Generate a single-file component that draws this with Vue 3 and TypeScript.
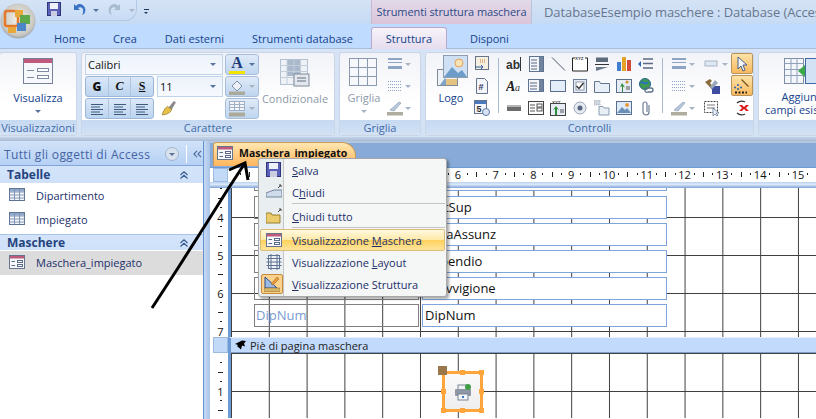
<script setup lang="ts">
const form = `<rect x=".5" y=".5" width="15" height="13" fill="#f7f8fb" stroke="#66748e"/><rect x="1" y="1" width="14" height="2.5" fill="#c05a7c"/><path d="M2.5 6.5h3.5M2.5 10.5h3.5" stroke="#5b6a85"/><rect x="8.5" y="5.5" width="5" height="2" fill="#fff" stroke="#5b6a85"/><rect x="8.5" y="9.5" width="5" height="2" fill="#fff" stroke="#5b6a85"/>`
const bigForm = `<rect x=".5" y=".5" width="29" height="25" fill="#f7f8fb" stroke="#75829a"/><rect x="1" y="1" width="28" height="4" fill="#c05a7c"/><path d="M4 12.500h7M4 19.500h7" stroke="#7f8ba0"/><rect x="14.500" y="10.500" width="11" height="3" fill="#fff" stroke="#7f8ba0"/><rect x="14.500" y="17.500" width="11" height="3" fill="#fff" stroke="#7f8ba0"/>`
const table = `<rect x=".5" y=".5" width="15" height="12" fill="#f4f6fb" stroke="#5f7393"/><rect x="1" y="1" width="14" height="2.5" fill="#8fa8cb"/><path d="M.5 4h15M.5 7h15M.5 10h15M5.5 1v11M10.5 1v11" stroke="#8196b5" fill="none"/>`
const bars = (c = '#8ea4c4') => `<rect x="1" y="2" width="14" height="2" fill="${c}"/><rect x="1" y="6" width="14" height="1" fill="${c}"/><rect x="1" y="10" width="14" height="3" fill="${c}"/>`
const dots = `<path d="M1 3.5h14M1 6.5h14M1 9.5h14M1 12.5h14" stroke="#8ea4c4" stroke-dasharray="1 1"/>`
const pen = `<path d="M3 10 12 2l2 1-7 8z" fill="#b8c8dc" stroke="#8596ae" stroke-width=".6"/><rect x="0" y="12" width="16" height="3.5" fill="#b0ad9e"/>`

const galleryIcons: string[] = [
  `<text x="0" y="13" font-family="Liberation Sans" font-weight="700" font-size="12" fill="#333">ab</text><path d="M14.5 1v14" stroke="#333"/>`,
  `<rect x="1.5" y=".5" width="14" height="15" fill="#f3f5fa" stroke="#5f7393"/><rect x="11" y="1" width="4" height="14" fill="#6f829e"/><path d="M3 4h6M3 7h6M3 10h6M3 13h6" stroke="#5b6a85"/>`,
  `<path d="M2 1.5 15 14.5" stroke="#4a5a70"/>`,
  `<path d="M3 2H.5v13h15V2H13" fill="#fff" stroke="#222"/><text x="3" y="4" font-family="Liberation Sans" font-weight="700" font-size="4.4" fill="#444">XYZ</text>`,
  `<rect x="2" y="1.5" width="12" height="4.5" fill="#5d6b7d"/><path d="M1 8.5h14" stroke="#333"/><path d="M2 15V11h12z" fill="#6d7b8d"/>`,
  `<rect x="1" y="6" width="4" height="9" fill="#3f7fd0"/><rect x="6" y="1" width="4" height="14" fill="#e2a22a"/><rect x="11" y="4" width="4" height="11" fill="#d04b3a"/>`,
  `<path d="M5 3h10M5 7.5h10M5 12h10" stroke="#5b6a85" stroke-width="1.4"/><path d="M0 8l3-3v6z" fill="#2c64b8"/>`,
  `<text x="0" y="13" font-family="Liberation Serif" font-weight="700" font-style="italic" font-size="14" fill="#222">A</text><text x="9" y="13" font-family="Liberation Serif" font-style="italic" font-size="10" fill="#333">a</text>`,
  `<rect x=".5" y="1.5" width="15" height="12" fill="#f3f5fa" stroke="#5f7393"/><rect x="11" y="2" width="4" height="11" fill="#6f829e"/><path d="M2 5h7M2 8h7M2 11h7" stroke="#5b6a85"/>`,
  `<rect x=".5" y="2.5" width="15" height="11" fill="#e4eefa" stroke="#5a6d8a"/>`,
  `<rect x="1.5" y="1.5" width="13" height="13" fill="#e6ebf3" stroke="#6c7d97"/><rect x="4" y="4" width="8" height="8" fill="#fff" stroke="#8a99ae"/><path d="M4.5 8 7 10.5 11.5 5" stroke="#333" stroke-width="1.4" fill="none"/>`,
  `<path d="M.5 14.5V3.5h5l1 2h9v9z" fill="#e8eff8" stroke="#62758f"/>`,
  `<rect x=".5" y="1.5" width="15" height="13" fill="#e6ecf4" stroke="#5a6d8a"/><path d="M6 14V8L4 9.5 6 5l3 4.500-2-1v6z" fill="#2e8b3a"/><circle cx="11" cy="4" r="1.500" fill="#d08a2a"/><path d="M10 9h4M10 11h4" stroke="#555"/>`,
  `<circle cx="7" cy="6" r="5.500" fill="#3d9a50" stroke="#24608e"/><path d="M3 5c3-3 4 3 7-1" stroke="#2b6fc0" stroke-width="2" fill="none"/><path d="M7 12a2 2 0 0 1 3-2h3a2 2 0 0 1 0 4h-3a2 2 0 0 1-3-2z" fill="none" stroke="#5a6f88" stroke-width="1.3"/>`,
  `<rect x="1" y="5" width="14" height="6" fill="#6c6c6c"/><rect x="1" y="5" width="14" height="2" fill="#b5b5b5"/>`,
  `<rect x=".5" y="1.5" width="15" height="13" fill="#fff" stroke="#444"/><path d="M2 5h5M2 8h5M2 11h5" stroke="#555"/><rect x="9" y="4" width="5" height="3" fill="none" stroke="#555"/><rect x="9" y="8" width="5" height="3" fill="none" stroke="#555"/>`,
  `<rect x=".5" y="3.500" width="15" height="12" fill="#e6ecf4" stroke="#444"/><path d="M5 15V9L3 10l3-4 3 4-2-1v6z" fill="#2e8b3a"/><text x="2" y="3.500" font-family="Liberation Sans" font-weight="700" font-size="4.4" fill="#444">XYZ</text><path d="M10 10h4M10 12h4" stroke="#555"/>`,
  `<circle cx="8" cy="8" r="6" fill="#e5eaf2" stroke="#9aa7ba"/><circle cx="8" cy="8" r="2.500" fill="#55657f"/>`,
  `<path d="M0 0h6v5H0z" fill="#cfd6e0" stroke-dasharray="1 1" stroke="#a9b4c4"/><path d="M5 6.500h4l1 1.500h5v7H5z" fill="#e9eff7" stroke="#8a9ab0"/>`,
  `<rect x=".5" y="1.500" width="15" height="13" fill="#dfeafa" stroke="#5a6d8a"/><path d="M1 13 6 7l3 3 2-2 4 5z" fill="#6b8fb5"/><circle cx="11" cy="5" r="2" fill="#e89a3c"/>`,
  `<path d="M11 5v7a3 3 0 0 1-6 0V4a2 2 0 0 1 4 0v8" fill="none" stroke="#6d7d95" stroke-width="1.200"/>`,
]
const stackIcons = [
  `<rect x="1.500" y=".5" width="13" height="13" fill="#f5efe0" stroke="#66748e"/><path d="M6 4h6M6 6h6" stroke="#c9792c" stroke-dasharray="1 1"/><path d="M1 11h8M7 9l2 2-2 2" stroke="#2c5aa0" fill="none"/>`,
  `<path d="M2.500.5h8l3 3v12h-11z" fill="#f2f5fa" stroke="#66748e"/><text x="4.500" y="12" font-family="Liberation Sans" font-weight="700" font-size="9" fill="#335">#</text>`,
  `<rect x=".5" y=".5" width="12" height="13" fill="#f4f6fb" stroke="#66748e"/><rect x="1" y="1" width="11" height="3" fill="#4b79c0"/><text x="2.500" y="12" font-family="Liberation Sans" font-weight="700" font-size="9" fill="#333">5</text><circle cx="12" cy="12" r="3.500" fill="#d7e3f3" stroke="#5d7ea8"/>`,
]
const nums = (from: number, to: number) => Array.from({ length: to - from + 1 }, (_, i) => from + i)
const hCells = nums(0, 15).map((n) => (n >= 6 ? String(n) : ''))
const vCellsForm = nums(3, 7)
const vCellsFoot = ['', '1']
const rows = [
  { lab: '', fld: 'MatSup' },
  { lab: '', fld: 'DataAssunz' },
  { lab: '', fld: 'Stipendio' },
  { lab: '', fld: 'Provvigione' },
  { lab: 'DipNum', fld: 'DipNum' },
]
const galleryIndex = galleryIcons.map((svg, i) => ({ svg, i }))
const handles = ['tm', 'tr', 'ml', 'mr', 'bl', 'bm', 'br']
</script>

<template>
  <div class="app">
    <div class="title-row">
      <div class="qat">
        <svg class="ic" viewBox="0 0 16 16"><rect x=".5" y=".5" width="13" height="13" fill="#5a60b8" stroke="#2e3578"/><rect x="3" y="1" width="8" height="6" fill="#eef0fa"/><rect x="4" y="9" width="6" height="5" fill="#c9cddf"/></svg>
        <svg class="ic qi" viewBox="0 0 16 16"><path d="M3 2v6h6L7 6c3-2 6 0 5 5l-1 2c3-1 4-4 3-7S8 0 5 4z" fill="#3a72c4"/></svg>
        <span class="drop"></span>
        <svg class="ic qi" viewBox="0 0 16 16"><path d="M13 2v6H7l2-2C6 4 3 6 4 11l1 2C2 12 1 9 2 6s6-6 9-2z" fill="#a9bccf"/></svg>
        <span class="drop pale"></span>
      </div>
      <span class="qat-more"></span>
      <div class="ctx-head">Strumenti struttura maschera</div>
      <div class="doc-title">DatabaseEsempio maschere : Database (Acces</div>
    </div>

    <nav class="tabs">
      <span class="tab">Home</span>
      <span class="tab">Crea</span>
      <span class="tab">Dati esterni</span>
      <span class="tab">Strumenti database</span>
      <span class="tab active">Struttura</span>
      <span class="tab">Disponi</span>
    </nav>

    <section class="ribbon">
      <div class="group g-view">
        <div class="g-body big-col">
          <svg class="big" viewBox="0 0 30 28" v-html="bigForm"></svg>
          <span class="big-label">Visualizza</span>
          <span class="drop lbl-drop"></span>
        </div>
        <div class="g-label">Visualizzazioni</div>
      </div>

      <div class="group g-font">
        <div class="g-body font-body">
          <div class="font-left">
            <div class="combo font-combo"><span>Calibri</span><i class="drop"></i></div>
            <div class="font-mid">
              <div class="btns">
                <span class="fb b">G</span><span class="fb i">C</span><span class="fb u">S</span>
              </div>
              <div class="combo size-combo"><span>11</span><i class="drop"></i></div>
            </div>
            <div class="font-mid">
              <div class="btns">
                <span class="fb" v-for="a in 3" :key="a"><svg class="al" viewBox="0 0 14 12"><path d="M1 1.500h12M1 4h9M1 6.500h12M1 9h9M1 11.500h12" stroke="#3f5a7e" /></svg></span>
              </div>
              <svg class="brush" viewBox="0 0 16 16"><path d="M8 7 13 1l2 1-4 7z" fill="#8a8a8a"/><path d="M2 14c1-3 2-6 5-8l4 3c-1 3-5 5-9 5z" fill="#e7c04a" stroke="#8c6a1c" stroke-width=".6"/></svg>
            </div>
          </div>
          <div class="font-right">
            <div class="cbtn on">
              <span class="a-letter">A</span><i class="drop"></i>
            </div>
            <div class="cbtn">
              <svg class="ic" viewBox="0 0 16 16"><path d="M3 7 8 2l5 5-5 5z" fill="#eef2f8" stroke="#7f8fa6"/><rect y="12.500" width="16" height="3.500" fill="#aaa99a"/></svg><i class="drop pale"></i>
            </div>
            <div class="cbtn">
              <svg class="ic" viewBox="0 0 16 16"><rect x=".5" y=".5" width="15" height="9" fill="#f4f6fb" stroke="#9fb0c6"/><path d="M.5 3.500h15M.5 6.500h15M5.500 .5v9M10.500 .5v9" stroke="#9fb0c6"/><rect y="11.500" width="16" height="4" fill="#aaa99a"/></svg><i class="drop pale"></i>
            </div>
          </div>
          <div class="big-col cond">
            <svg class="big" viewBox="0 0 30 28"><rect x=".5" y=".5" width="27" height="25" fill="#eef2f7" stroke="#b3c0d0"/><rect x="7" y="1" width="13" height="16" fill="#a9b8cb"/><path d="M.5 6.500h27M.5 12.500h27M.5 18.500h27M7 .5v25M14 .5v25M20.500 .5v25" stroke="#c3cedb"/><rect x="14" y="15" width="15" height="12" fill="#e4e8ee" stroke="#7f8a99"/><path d="M17 19h9M17 22h9" stroke="#5f6d80"/></svg>
            <span class="big-label dim">Condizionale</span>
          </div>
        </div>
        <div class="g-label">Carattere</div>
      </div>

      <div class="group g-grid">
        <div class="g-body grid-body">
          <div class="big-col griglia">
            <svg class="big" viewBox="0 0 30 28"><rect x=".5" y=".5" width="27" height="27" fill="#f7f8fb" stroke="#8b9aae"/><path d="M9.500 0v28M18.500 0v28M0 9.500h28M0 18.500h28" stroke="#8b9aae"/></svg>
            <span class="big-label dim">Griglia</span>
            <span class="drop lbl-drop pale"></span>
          </div>
          <div class="stack">
            <span class="st"><svg class="ic" viewBox="0 0 16 16" v-html="bars()"></svg><i class="drop pale"></i></span>
            <span class="st"><svg class="ic" viewBox="0 0 16 16" v-html="dots"></svg><i class="drop pale"></i></span>
            <span class="st"><svg class="ic" viewBox="0 0 16 16" v-html="pen"></svg><i class="drop pale"></i></span>
          </div>
        </div>
        <div class="g-label">Griglia</div>
      </div>

      <div class="group g-ctrl">
        <div class="g-body ctrl-body">
          <div class="big-col logo">
            <svg class="logo-ic" viewBox="0 0 32 32"><rect x=".5" y="14.500" width="20" height="16" fill="#eef2f8" stroke="#7f8b99"/><path d="M3 30l5-7 5 7z" fill="#7fa3c9"/><rect x="9" y="24" width="11" height="6" fill="#e5c27f"/><rect x="6.500" y=".5" width="24" height="22" fill="#cfe0f5" stroke="#8c9cb1"/><circle cx="22" cy="8" r="4" fill="#f9e2b4" stroke="#e5a45b"/><path d="M7 22l8-10 6 6 4-3 5 7z" fill="#6e9cc9"/></svg>
            <span class="big-label">Logo</span>
          </div>
          <div class="col3">
            <svg v-for="(s, i) in stackIcons" :key="i" class="ic" viewBox="0 0 16 16" v-html="s"></svg>
          </div>
          <span class="vsep"></span>
          <div class="gallery">
            <svg v-for="g in galleryIndex" :key="g.i" class="ic" viewBox="0 0 16 16" v-html="g.svg"></svg>
          </div>
          <span class="vsep"></span>
          <div class="stack st2">
            <span class="st"><svg class="ic" viewBox="0 0 16 16" v-html="bars()"></svg><i class="drop pale"></i></span>
            <span class="st"><svg class="ic" viewBox="0 0 16 16" v-html="dots"></svg><i class="drop pale"></i></span>
            <span class="st"><svg class="ic" viewBox="0 0 16 16" v-html="pen"></svg><i class="drop pale"></i></span>
          </div>
          <div class="stack st3">
            <span class="st"><svg class="ic" viewBox="0 0 16 16"><rect x="1" y="5" width="12" height="5" fill="#dfe7f2" stroke="#a8b6c8"/></svg><i class="drop pale"></i></span>
            <span class="st"><svg class="ic" viewBox="0 0 16 16"><path d="M1 4 6 1l2 2-2 2 6 7-2 2-6-7z" fill="#8a6b3e"/><rect x="8" y="8" width="8" height="8" fill="#3f4b9e"/><path d="M11 2l3 3-6 6-2-2z" fill="#9aa7ba"/></svg></span>
            <span class="st"><svg class="ic" viewBox="0 0 16 16"><rect x=".5" y="1.500" width="13" height="11" fill="#fff" stroke="#444" stroke-dasharray="2 1"/><path d="M3 5h8M3 8h8" stroke="#777"/><path d="M9 8v8l2-2 2 2 1-1-2-2h3z" fill="#e6eef9" stroke="#5a6f8f" stroke-width=".7"/></svg></span>
          </div>
          <div class="tools">
            <span class="tool on"><svg class="ic" viewBox="0 0 16 16"><path d="M4 1v12l3-3 2 5 2-1-2-5h4z" fill="#f3f6fb" stroke="#4a5f88"/></svg></span>
            <span class="tool on"><svg class="ic" viewBox="0 0 16 16"><path d="M8 1l7 7-1 1-7-7z" fill="#7d5a22"/><path d="M1 9.500h.01M4 7h.01M4 11h.01M7 9.500h.01" stroke="#2f60b0" stroke-width="2" stroke-linecap="round"/><path d="M1 14.500h12" stroke="#222" stroke-width="2" stroke-dasharray="2 1.500"/></svg></span>
            <span class="tool"><svg class="ic" viewBox="0 0 16 16"><path d="M3 3a7 7 0 0 1 8-1M11 14a7 7 0 0 1-8-1" fill="none" stroke="#333" stroke-width="1.300"/><path d="M5 5h3l2 2 2-2h3l-3 3 3 3h-3l-2-2-2 2H5l3-3z" fill="#d91f1f"/></svg></span>
          </div>
        </div>
        <div class="g-label">Controlli</div>
      </div>

      <div class="group g-add">
        <div class="g-body big-col add">
          <svg class="add-ic" viewBox="0 0 32 28"><rect x=".5" y=".5" width="19" height="25" fill="#f3f6fb" stroke="#7f8ea5"/><path d="M.5 5.500h19M.5 11.500h19M.5 17.500h19M7 0v26M13 0v26" stroke="#8fa1b9"/><rect x="21.500" y=".5" width="12" height="25" fill="#d4e2f5" stroke="#3f69a8"/><path d="M14 13l7-6v12z" fill="#39a845"/></svg>
          <span class="add-text">Aggiungi<br />campi esistenti</span>
        </div>
        <div class="g-label"></div>
      </div>
    </section>

    <div class="ribbon-foot"></div>

    <main class="main">
      <aside class="nav">
        <div class="nav-head">
          <span class="nav-title">Tutti gli oggetti di Access</span>
          <span class="nav-circle"><i class="drop dark"></i></span>
          <span class="nav-line"></span>
          <svg class="chev-l" viewBox="0 0 10 8"><path d="M4.500 .5 1 4l3.500 3.500M9 .5 5.500 4 9 7.500" fill="none" stroke="#4d6d9e" stroke-width="1.300"/></svg>
        </div>
        <div class="sec first"><span>Tabelle</span><svg class="chev-u" viewBox="0 0 8 8"><path d="M.5 4 4 .8 7.500 4M.5 7.500 4 4.300l3.500 3.200" fill="none" stroke="#35588c" stroke-width="1.100"/></svg></div>
        <div class="item"><svg class="ic" viewBox="0 0 16 14" v-html="table"></svg><span>Dipartimento</span></div>
        <div class="item"><svg class="ic" viewBox="0 0 16 14" v-html="table"></svg><span>Impiegato</span></div>
        <div class="sec"><span>Maschere</span><svg class="chev-u" viewBox="0 0 8 8"><path d="M.5 4 4 .8 7.500 4M.5 7.500 4 4.300l3.500 3.200" fill="none" stroke="#35588c" stroke-width="1.100"/></svg></div>
        <div class="item sel"><svg class="ic" viewBox="0 0 16 14" v-html="form"></svg><span>Maschera_impiegato</span></div>
      </aside>

      <div class="split"></div>

      <div class="doc">
        <div class="doc-tabs">
          <div class="doc-tab"><svg class="ic" viewBox="0 0 16 14" v-html="form"></svg><span>Maschera_impiegato</span></div>
        </div>
        <div class="hruler">
          <span class="corner"></span>
          <div class="hr-cells">
            <span v-for="(n, i) in hCells" :key="i" class="hr-cell">
              <em>{{ n }}</em><em><s class="dot"></s></em><em><s class="bar"></s></em><em><s class="dot"></s></em>
            </span>
          </div>
        </div>
        <div class="hr-gap"></div>
        <div class="body-row">
          <div class="vruler vr-form">
            <span v-for="n in vCellsForm" :key="n" class="vr-cell"><em>{{ n }}</em><em><s class="vdot"></s></em><em><s class="vbar"></s></em><em><s class="vdot"></s></em></span>
          </div>
          <div class="canvas form-canvas">
            <div class="frow partial"><span class="lab"></span><span class="fld"></span></div>
            <div v-for="r in rows" :key="r.fld" class="frow">
              <span class="lab">{{ r.lab }}</span><span class="fld">{{ r.fld }}</span>
            </div>
          </div>
        </div>
        <div class="band-row">
          <span class="band-corner"></span>
          <div class="band"><svg class="band-arrow" viewBox="0 0 12 10"><path d="M11 1 7 0.500 2 3l-2 1 3 1-1 1 4 3.500 1-4 3 1-1-3z" fill="#000"/></svg><span>Piè di pagina maschera</span></div>
        </div>
        <div class="body-row foot">
          <div class="vruler vr-foot">
            <span v-for="(n, i) in vCellsFoot" :key="i" class="vr-cell"><em>{{ n }}</em><em><s class="vdot"></s></em><em><s class="vbar"></s></em><em><s class="vdot"></s></em></span>
          </div>
          <div class="canvas foot-canvas">
            <div class="printer">
              <span class="handle tl"></span>
              <span v-for="h in handles" :key="h" class="nub" :class="h"></span>
              <svg viewBox="0 0 18 18" class="pr-ic"><rect x="4" y="2" width="10" height="5" fill="#eef2f7" stroke="#7b8696"/><rect x="1" y="6" width="16" height="7" rx="1" fill="#8d97a5"/><rect x="4" y="11" width="10" height="6" fill="#f3f6fa" stroke="#7b8696"/><rect x="8" y="13" width="2" height="2" fill="#3a7cc4"/><circle cx="14" cy="4" r="3" fill="#3f9e44"/></svg>
            </div>
          </div>
        </div>
      </div>
    </main>

    <div class="menu">
      <div class="mi"><span class="mi-ic"><svg class="ic" viewBox="0 0 16 16"><rect x=".5" y=".5" width="14" height="14" fill="#5a60b8" stroke="#2e3578"/><rect x="3" y="1" width="9" height="6" fill="#eef0fa"/><rect x="4" y="9" width="7" height="6" fill="#c9cddf"/></svg></span><span><u>S</u>alva</span></div>
      <div class="mi"><span class="mi-ic"><svg class="ic" viewBox="0 0 16 16"><path d="M0 13V9l8-3h8v7z" fill="#cfdcec" stroke="#75859b"/><path d="M12 4l3-3M13 1h2v2" stroke="#444" fill="none"/></svg></span><span>C<u>h</u>iudi</span></div>
      <div class="msep"></div>
      <div class="mi"><span class="mi-ic"><svg class="ic" viewBox="0 0 16 16"><path d="M0 15V5h5l1 2h8v8z" fill="#eccb6d" stroke="#96802f"/><path d="M12 4l3-3M13 1h2v2" stroke="#444" fill="none"/></svg></span><span><u>C</u>hiudi tutto</span></div>
      <div class="msep"></div>
      <div class="mi hot"><span class="mi-ic"><svg class="ic" viewBox="0 0 16 14" v-html="form"></svg></span><span>Visualizzazione <u>M</u>aschera</span></div>
      <div class="mi"><span class="mi-ic"><svg class="ic" viewBox="0 0 16 16"><rect x="2.500" y="1.500" width="11" height="13" fill="#eef1f6" stroke="#5f7393"/><path d="M.5 4.500h15M.5 8h15M.5 11.500h15M5 0v16M11 0v16" stroke="#5f7393"/></svg></span><span>Visualizzazione <u>L</u>ayout</span></div>
      <div class="mi"><span class="mi-ic checked"><svg class="ic" viewBox="0 0 16 16"><path d="M1 1v11h12z" fill="#9bbbe2" stroke="#2c4f8c"/><rect y="12" width="16" height="3.500" fill="#d5b66a" stroke="#8c6a1c" stroke-width=".5"/><path d="M7 8l6-7 2 2-6 6z" fill="#e89a3c" stroke="#9a5a16" stroke-width=".5"/></svg></span><span><u>V</u>isualizzazione Struttura</span></div>
    </div>

    <svg class="arrow" viewBox="0 0 816 419" width="816" height="419"><path d="M152 308 178 268 206 224 228 189 245 163" fill="none" stroke="#000" stroke-width="3"/><path d="M229 170 245 163 248 180" fill="none" stroke="#000" stroke-width="3"/></svg>

    <div class="orb">
      <svg viewBox="0 0 36 36" width="36" height="36">
        <defs><radialGradient id="orbg" cx=".5" cy=".45" r=".6"><stop offset="0" stop-color="#f3f0e8"/><stop offset=".75" stop-color="#cbc9c4"/><stop offset="1" stop-color="#8c94a0"/></radialGradient></defs>
        <circle cx="18" cy="18" r="17.500" fill="url(#orbg)"/>
        <rect x="5" y="8" width="13" height="15" rx="2" fill="none" stroke="#e3792c" stroke-width="2.500"/>
        <rect x="15" y="7" width="8" height="7" fill="#e8a83a"/>
        <rect x="20" y="12" width="10" height="9" fill="#5fa84a"/>
        <rect x="17" y="20" width="9" height="8" fill="#4c86c8"/>
        <rect x="8" y="24" width="8" height="6" fill="#e8a83a"/>
      </svg>
    </div>
  </div>
</template>

<style>
html, body { margin: 0; padding: 0; background: #fff; }
</style>

<style scoped>
.app { position: relative; width: 816px; height: 419px; overflow: hidden; font-family: "Open Sans", "Liberation Sans", sans-serif; font-size: 11px; color: #15428b; background: #fff; }
.ic { width: 16px; height: 16px; display: block; flex: none; }
i, em, s { font-style: normal; text-decoration: none; }

.drop { display: inline-block; width: 0; height: 0; border: 3px solid transparent; border-top: 3px solid #56739f; border-bottom: 0; flex: none; }
.drop.pale { border-top-color: #a8b4c4; }
.drop.dark { border-top-color: #5d7397; }

.title-row { display: flex; align-items: stretch; height: 24px; background: linear-gradient(#d5e3f5, #c5daf4); padding-left: 40px; box-sizing: border-box; overflow: hidden; }
.qat { width: 97px; height: 21px; flex: none; display: flex; align-items: center; padding-left: 7px; box-sizing: border-box; background: linear-gradient(#d7e5f8, #c8dcf5); border: 1px solid #b4c9e4; border-top: 0; border-left: 0; border-radius: 0 0 12px 0; }
.qi { margin-left: 8px; }
.qat .drop { margin-left: 6px; }
.qat-more { width: 5px; height: 2px; flex: none; margin: 9px 0 0 7px; border-top: 1px solid #1e395b; position: relative; }
.qat-more::after { content: ""; position: absolute; left: 0; top: 2px; border: 2.500px solid transparent; border-top-color: #1e395b; border-bottom: 0; }
.ctx-head { flex: none; margin-left: 222px; width: 161px; text-align: center; line-height: 24px; font-size: 11px; color: #2d4a86; background: linear-gradient(#e3dae9, #dac4d9); border-left: 1px solid #c9b8d0; border-right: 1px solid #b3c6de; white-space: nowrap; box-sizing: border-box; letter-spacing: -.1px; }
.doc-title { flex: none; margin-left: 12px; font-size: 13px; line-height: 24px; color: #68778e; white-space: nowrap; letter-spacing: -.09px; }

.tabs { display: flex; height: 24px; background: #bfdbff; padding-left: 40px; box-sizing: border-box; align-items: stretch; }
.tab { padding: 0 14px; line-height: 30px; white-space: nowrap; flex: none; }
.tab.active { margin-left: 4px; margin-top: 3px; line-height: 22px; height: 22px; padding: 0; border: 1px solid #b9a8ca; border-bottom: 0; border-radius: 3px 3px 0 0; background: linear-gradient(#f6f4fa, #e6dcee); box-sizing: border-box; width: 76px; text-align: center; }
.tabs .tab:last-child { margin-left: 9px; }

.ribbon { display: flex; height: 89px; padding: 3px 0 0 0; gap: 4px; background: linear-gradient(#d7e4f7, #d3e2f5); box-sizing: border-box; overflow: hidden; border-top: 1px solid #a9bdd6; }
.group { display: flex; flex-direction: column; flex: none; height: 84px; box-sizing: border-box; border: 1px solid #cbd6e4; border-radius: 3px; background: linear-gradient(#f2f3f8, #fff 60%); overflow: hidden; }
.g-body { flex: 1; min-height: 0; }
.g-label { height: 15px; flex: none; line-height: 15px; text-align: center; color: #3e6aaa; font-size: 11px; background: linear-gradient(#c5d9f1, #d3e2f5); white-space: nowrap; overflow: hidden; }
.g-view { width: 78px; margin-left: -1px; }
.g-font { width: 254px; }
.g-grid { width: 82px; }
.g-ctrl { width: 329px; }
.g-add { width: 90px; }

.big-col { display: flex; flex-direction: column; align-items: center; }
.big { width: 30px; height: 28px; margin-top: 5px; display: block; }
.big-label { line-height: 14px; margin-top: 5px; color: #15428b; white-space: nowrap; }
.big-label.dim { color: #8d99a8; }
.lbl-drop { margin-top: 5px; }

.font-body { display: flex; padding: 1px 0 0 3px; }
.font-left { display: flex; flex-direction: column; gap: 1px; width: 138px; }
.combo { display: flex; align-items: center; justify-content: space-between; background: linear-gradient(#edf3fb, #f6f9fe); border: 1px solid #c2d4ea; box-sizing: border-box; height: 21px; padding: 0 6px 0 2px; color: #111; font-size: 11px; }
.font-mid { display: flex; gap: 3px; height: 21px; align-items: center; }
.btns { display: flex; width: 69px; height: 21px; border: 1px solid #9ab6d8; border-radius: 3px; box-sizing: border-box; background: linear-gradient(#dbe8f8, #bcd4ef); flex: none; }
.fb { flex: 1; display: flex; align-items: center; justify-content: center; border-right: 1px solid #aec5e0; color: #111; font-size: 12px; }
.fb:last-child { border-right: 0; }
.fb.b { font-weight: 800; }
.fb.i { font-family: "Liberation Serif", serif; font-style: italic; font-weight: 700; }
.fb.u { font-family: "Liberation Serif", serif; font-weight: 700; text-decoration: underline; }
.al { width: 14px; height: 12px; }
.size-combo { width: 66px; flex: none; }
.brush { width: 17px; height: 17px; margin-left: 3px; }
.font-right { display: flex; flex-direction: column; gap: 1px; margin-left: 2px; width: 34px; }
.cbtn { height: 21px; box-sizing: border-box; border: 1px solid #a6bedc; border-radius: 3px; display: flex; align-items: center; justify-content: space-between; padding: 0 3px 0 3px; background: linear-gradient(#dfeaf8, #bfd5ef); }
.a-letter { font-family: "Liberation Serif", serif; font-weight: 700; font-size: 16px; color: #1e3a78; width: 16px; height: 19px; line-height: 15px; text-align: center; box-sizing: border-box; border-bottom: 3px solid #f2e400; }
.cond { width: 68px; margin-left: 2px; flex: none; }

.grid-body { display: flex; padding-left: 9px; }
.griglia { width: 30px; }
.griglia .big-label { width: 30px; display: flex; justify-content: center; }
.stack { display: flex; flex-direction: column; margin-left: 8px; }
.st { height: 22px; display: flex; align-items: center; gap: 2px; }

.ctrl-body { display: flex; }
.logo { width: 48px; flex: none; }
.logo-ic { width: 32px; height: 32px; display: block; margin: 2px 0 0 6px; }
.logo .big-label { margin-top: 4px; margin-left: 2px; }
.col3 { display: flex; flex-direction: column; gap: 6px; padding-top: 3px; width: 16px; flex: none; }
.vsep { width: 1px; height: 55px; background: #a9bbd2; margin: 5px 7px 0 8px; flex: none; }
.gallery { display: grid; grid-template-columns: repeat(7, 16px); grid-auto-rows: 16px; gap: 6px; padding-top: 3px; flex: none; }
.st2 { margin-left: 1px; width: 30px; }
.st3 { margin-left: 8px; }
.tools { display: flex; flex-direction: column; margin-left: 3px; }
.tool { width: 22px; height: 21px; display: flex; align-items: center; justify-content: center; box-sizing: border-box; border: 1px solid transparent; border-radius: 2px; margin-bottom: 1px; }
.tool.on { background: linear-gradient(#fde3a8, #f9b95f); border-color: #b8935a; }

.add { align-items: flex-start; padding-left: 6px; }
.add-ic { width: 32px; height: 28px; display: block; margin: 5px 0 0 19px; }
.add-text { line-height: 13px; margin-top: 4px; text-align: center; white-space: nowrap; color: #15428b; }

.ribbon-foot { height: 4px; background: linear-gradient(#c5d3e6, #a8bcd6); }

.main { display: flex; height: 278px; }
.nav { width: 203px; flex: none; background: #fff; border-right: 1px solid #6593cf; }
.nav-head { height: 25px; display: flex; align-items: center; padding: 2px 0 0 4px; background: linear-gradient(#d1e2f8, #b6d1f5); border-bottom: 1px solid #83a6d6; box-sizing: border-box; }
.nav-title { font-size: 12px; color: #4563a2; white-space: nowrap; width: 161px; letter-spacing: .35px; flex: none; }
.nav-circle { width: 12px; height: 12px; border-radius: 50%; background: #d8e2ef; border: 1px solid #a6b7cd; display: flex; align-items: center; justify-content: center; flex: none; }
.nav-line { width: 1px; height: 18px; background: #fff; margin-left: 7px; flex: none; }
.chev-l { width: 9px; height: 8px; margin-left: 6px; flex: none; }
.sec { height: 17px; display: flex; align-items: center; justify-content: space-between; padding: 0 15px 0 7px; font-weight: 700; font-size: 12px; color: #25437e; background: linear-gradient(#d3e4fa, #cfe1f9); border-top: 1px solid #a9c4e8; border-bottom: 1px solid #fff; box-sizing: border-box; }
.sec.first { height: 18px; border-top: 0; }
.chev-u { width: 8px; height: 8px; }
.item { height: 24px; display: flex; align-items: center; gap: 11px; padding: 0 0 2px 9px; box-sizing: border-box; color: #22306a; }
.item.sel { background: #dcdcdc; }
.item:has(+ .sec) { margin-bottom: 2px; }

.split { width: 6px; flex: none; background: linear-gradient(90deg, #c6d9f3, #a9c4e8); }

.doc { flex: 1; min-width: 0; display: flex; flex-direction: column; }
.doc-tabs { height: 27px; flex: none; background: linear-gradient(#b4c8e2 0 2px, #88aad8 2px); border-bottom: 1px solid #6f9ad1; box-sizing: border-box; padding: 1px 0 0 3px; }
.doc-tab { width: 143px; height: 24px; display: flex; align-items: center; gap: 6px; padding: 0 0 4px 3px; box-sizing: border-box; border: 1px solid #c99b58; border-bottom: 0; border-radius: 3px 14px 0 0; background: linear-gradient(#ffe7b0, #ffb55c); font-weight: 700; font-size: 10.500px; color: #111; white-space: nowrap; }
.hruler { display: flex; height: 14px; flex: none; background: #fff; padding-left: 3px; overflow: hidden; }
.corner { width: 15px; height: 14px; flex: none; background: #c2d9f8; border: 1px solid #9cb9df; box-sizing: border-box; position: relative; z-index: 1; }
.hr-cells { display: flex; flex: none; margin-left: -1.725px; }
.hr-cell { width: 37.800px; display: flex; flex: none; }
.hr-cell em { width: 9.450px; height: 14px; padding-bottom: 2px; box-sizing: border-box; display: flex; align-items: center; justify-content: center; font-size: 11px; color: #111; flex: none; }
.dot { width: 1px; height: 2px; background: #222; }
.bar { width: 1px; height: 5px; background: #222; }
.hr-gap { height: 6px; flex: none; background: linear-gradient(#b8d0f0, #dce9fb 40%, #80a5d8 100%); }

.body-row { display: flex; flex: none; height: 149px; background: #fff; padding-left: 3px; overflow: hidden; }
.body-row.foot { height: 65px; }
.vruler { width: 15px; flex: none; border-right: 3px solid #6e9ad4; overflow: hidden; display: flex; flex-direction: column; }
.vr-form .vr-cell:first-child { margin-top: -13.750px; }
.vr-foot .vr-cell:first-child { margin-top: -4.750px; }
.vr-cell { height: 38px; flex: none; display: flex; flex-direction: column; }
.vr-cell em { height: 9.500px; display: flex; align-items: center; justify-content: center; font-size: 11px; color: #111; flex: none; }
.vdot { width: 2px; height: 1px; background: #222; }
.vbar { width: 5px; height: 1px; background: #222; }

.canvas { flex: 1; min-width: 0; position: relative; background-color: #fff; background-image: linear-gradient(90deg, #404040 1px, transparent 1px), linear-gradient(#404040 1px, transparent 1px); background-size: 37.800px 38px; }
.form-canvas { background-position: 0 29px; display: flex; flex-direction: column; gap: 4px; }
.foot-canvas { background-position: 0 0; }
.frow { display: flex; height: 23px; padding-left: 23px; flex: none; gap: 3px; }
.frow.partial { height: 4px; margin-top: -1px; margin-bottom: 1px; }
.lab { width: 165px; box-sizing: border-box; border: 1px solid #808080; color: #7a9bd0; font-size: 13px; line-height: 21px; padding-left: 1px; }
.fld { width: 245px; box-sizing: border-box; border: 1px solid #7ea6dc; background: #fff; color: #111; font-size: 13px; line-height: 21px; padding-left: 2px; }
.frow.partial .lab, .frow.partial .fld { border-top: 0; }

.band-row { display: flex; height: 16px; flex: none; padding-left: 3px; background: #fff; }
.band-corner { width: 15px; height: 16px; background: #c2d9f8; border: 1px solid #9cb9df; box-sizing: border-box; flex: none; }
.band { flex: 1; display: flex; align-items: center; gap: 3px; border-left: 3px solid #6e9ad4; background: #c2dafb; border-top: 1px solid #e7f0fc; border-bottom: 1px solid #7f9fcb; font-size: 11px; color: #222; padding-left: 4px; box-sizing: border-box; }
.band-arrow { width: 12px; height: 10px; flex: none; }

.printer { position: absolute; left: 211px; top: 18px; width: 41px; height: 41px; background: linear-gradient(#fafafa, #eeeeee); border: 3px solid #ffa53c; box-sizing: border-box; display: flex; align-items: center; justify-content: center; }
.pr-ic { width: 18px; height: 18px; }
.handle { position: absolute; width: 9px; height: 9px; background: #9a784c; left: -7px; top: -8px; z-index: 1; }
.nub { position: absolute; width: 5px; height: 5px; background: #ffa53c; }
.tm { left: 15px; top: -4px; }
.tr { right: -4px; top: -4px; }
.ml { left: -4px; top: 15px; }
.mr { right: -4px; top: 15px; }
.bl { left: -4px; bottom: -4px; }
.bm { left: 15px; bottom: -4px; }
.br { right: -4px; bottom: -4px; }

.menu { position: absolute; left: 258px; top: 158px; width: 189px; height: 139px; box-sizing: border-box; padding: 0 1px 1px; background: #f5f6f6; border: 1px solid #a8a8a8; border-radius: 3px; box-shadow: 2px 2px 3px rgba(0, 0, 0, .35); color: #22306a; font-size: 11px; background-image: linear-gradient(90deg, #e9eef0 24px, #c5c5c5 24px, #c5c5c5 25px, transparent 25px); }
.mi { height: 22px; display: flex; align-items: center; gap: 6px; white-space: nowrap; border: 1px solid transparent; box-sizing: border-box; border-radius: 2px; }
.mi-ic { width: 25px; height: 20px; display: flex; align-items: center; justify-content: center; flex: none; }
.mi-ic.checked { background: #fcd28c; border: 1px solid #c88a3c; border-radius: 2px; box-sizing: border-box; height: 20px; width: 22px; margin-right: 3px; }
.mi.hot { background: linear-gradient(#fff9e0, #ffe9a5 50%, #ffd25e 51%, #ffe49a); border-color: #d9bd78; }
.msep { height: 1px; margin: 0 0 1px 32px; background: #c5c5c5; }

.arrow { position: absolute; left: 0; top: 0; pointer-events: none; }
.orb { position: absolute; left: 0; top: 3px; width: 36px; height: 36px; }
</style>
